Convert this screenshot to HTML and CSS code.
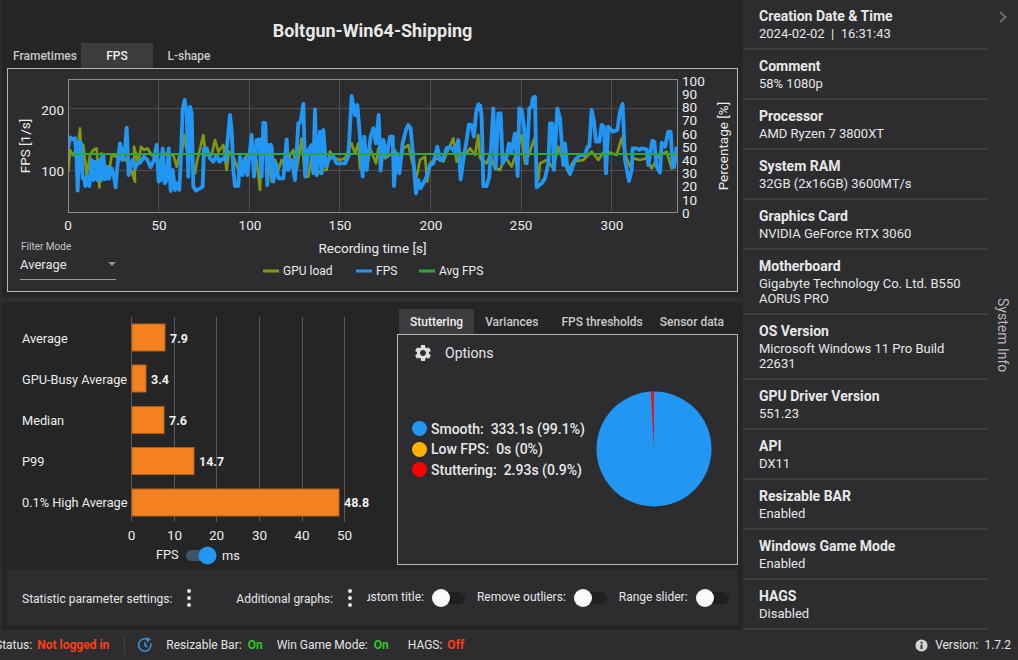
FILE: index.html
```html
<!DOCTYPE html>
<html lang="en">
<head>
<meta charset="utf-8">
<title>Boltgun-Win64-Shipping</title>
<link rel="stylesheet" href="styles.css">
</head>
<body>
<div class="app">
  <div class="upper">
    <main class="main">
      <section class="top">
        <h1 class="title">Boltgun-Win64-Shipping</h1>
        <nav class="tabs">
          <span class="tab tab-a">Frametimes</span>
          <span class="tab tab-a active">FPS</span>
          <span class="tab tab-a">L-shape</span>
        </nav>
        <div class="panel">
          <svg class="chart" viewBox="8 69 729 222" width="729" height="222">
            <defs><clipPath id="plot"><rect x="68" y="79" width="609" height="133"/></clipPath></defs>
            <g class="grid">
              <line x1="158.5" y1="79" x2="158.5" y2="212"/><line x1="249.5" y1="79" x2="249.5" y2="212"/>
              <line x1="339.5" y1="79" x2="339.5" y2="212"/><line x1="430.5" y1="79" x2="430.5" y2="212"/>
              <line x1="521.5" y1="79" x2="521.5" y2="212"/><line x1="611.5" y1="79" x2="611.5" y2="212"/>
              <line x1="68" y1="108.5" x2="677" y2="108.5"/><line x1="68" y1="170.5" x2="677" y2="170.5"/>
            </g>
            <g clip-path="url(#plot)">
              <g class="olive">
                <polyline transform="translate(60 80) scale(.3333)" points="25,275 30,210 38,225 45,215 50,240 60,145 65,250 70,195 80,285 90,225 100,210 110,205 118,322 125,220 135,290 150,260 155,225 165,230 175,225 180,190 195,240 205,245 225,305 222,200 235,250 243,200 252,210 262,205 275,225 285,230 295,260 310,215 320,225 340,225 350,260 358,225 365,225 372,165 380,210 390,215 405,280 412,240 430,165 437,225 445,225 455,225 465,180 475,215 490,195 500,270 507,215 520,230 535,270 550,270 560,225 580,215 590,240 600,330 605,210 620,215 630,225"/>
                <polyline transform="translate(270 80) scale(.3333)" points="0,225 5,305 15,240 25,270 35,240 50,270 60,225 70,210 80,270 95,175 105,290 115,290 125,230 140,285 155,270 170,270 180,215 195,235 210,240 225,235 245,190 255,220 265,190 270,265 290,265 300,205 318,250 325,205 345,235 360,225 375,210 385,270 400,205 415,195 425,240 440,290 450,240 465,230 472,305 480,250 500,235 520,245 530,220 550,175 560,245 575,220 590,220 600,205 615,225 625,165 630,235"/>
                <polyline transform="translate(480 80) scale(.3333)" points="0,235 20,250 30,225 45,265 60,270 75,230 95,260 105,230 125,165 135,250 150,215 163,175 175,300 180,250 200,240 220,265 235,200 250,245 265,270 280,245 310,240 335,215 355,240 375,210 395,220 410,225 425,175 440,235 450,260 460,235 480,240 500,235 515,265 535,230 560,215 575,265 590,240"/>
              </g>
              <g class="blue">
                <polyline transform="translate(60 80) scale(.3333)" points="25,205 30,172 38,178 45,175 50,240 53,332 58,185 63,190 68,295 72,290 76,318 82,290 88,318 95,240 100,300 105,245 112,300 118,240 125,300 130,225 136,298 142,260 147,296 155,265 162,290 167,322 172,260 180,190 186,240 194,215 200,143 206,285 212,255 218,240 225,265 232,250 240,248 252,230 262,240 272,262 282,240 290,195 296,305 302,300 308,205 314,310 320,300 326,205 332,333 338,270 345,330 352,310 358,330 362,250 368,90 374,60 380,100 385,290 390,80 395,100 400,320 408,332 420,325 428,320 432,205 440,205 450,235 460,245 470,225 478,245 490,235 497,240 503,180 510,105 515,150 520,270 525,318 535,318 540,230 548,285 555,235 562,285 570,210 575,165 582,290 590,180 598,178 605,290 610,128 616,130 622,315 630,190"/>
                <polyline transform="translate(270 80) scale(.3333)" points="0,190 5,200 10,305 18,250 25,295 40,295 50,178 55,270 65,240 75,300 85,130 92,125 100,72 106,290 115,210 125,195 130,280 135,88 140,285 150,155 155,280 160,150 168,260 178,235 190,230 200,250 215,250 225,250 235,230 245,48 255,105 262,75 270,170 278,290 283,170 290,270 302,170 310,145 318,190 326,105 332,272 340,180 350,230 360,170 368,170 372,318 380,220 388,280 398,190 408,150 415,135 422,145 430,235 438,340 445,300 452,325 460,310 470,290 480,255 490,250 502,200 510,240 518,240 530,205 540,200 555,215 565,180 572,298 580,240 590,180 597,133 605,135 612,170 618,100 625,73 630,72"/>
                <polyline transform="translate(480 80) scale(.3333)" points="0,72 5,110 10,318 20,318 28,290 40,85 47,265 55,100 62,100 68,250 80,230 87,190 93,220 105,160 113,288 118,85 125,90 132,140 140,250 148,85 155,80 158,55 165,50 170,322 185,310 195,295 205,250 210,130 217,130 222,270 232,85 240,115 250,255 255,190 262,265 270,282 285,240 300,225 315,225 323,200 328,200 335,90 342,125 348,185 358,185 365,135 372,140 378,280 385,140 398,155 412,150 420,95 428,72 435,240 447,303 455,270 458,205 470,205 478,210 485,205 500,208 505,255 517,182 523,185 530,260 540,278 545,188 555,200 565,155 572,155 578,260 582,262 590,200"/>
              </g>
              <line class="avg" x1="68" y1="154" x2="677" y2="154"/>
            </g>
            <rect class="frame" x="68.5" y="79.5" width="609" height="133"/>
            <g class="tick">
              <text x="64" y="115" text-anchor="end">200</text><text x="64" y="176" text-anchor="end">100</text>
              <g text-anchor="middle">
                <text x="68" y="230">0</text><text x="159" y="230">50</text><text x="250" y="230">100</text>
                <text x="340" y="230">150</text><text x="431" y="230">200</text><text x="521" y="230">250</text><text x="612" y="230">300</text>
              </g>
              <text x="682" y="86">100</text><text x="682" y="99">90</text><text x="682" y="112">80</text><text x="682" y="125">70</text>
              <text x="682" y="139">60</text><text x="682" y="152">50</text><text x="682" y="165">40</text><text x="682" y="178">30</text>
              <text x="682" y="191">20</text><text x="682" y="205">10</text><text x="682" y="218">0</text>
              <text transform="rotate(-90 30 146)" x="30" y="146" text-anchor="middle">FPS [1/s]</text>
              <text transform="rotate(-90 728 146)" x="728" y="146" text-anchor="middle">Percentage [%]</text>
              <text x="372.5" y="253" text-anchor="middle">Recording time [s]</text>
            </g>
            <g class="legend">
              <line class="key-olive" x1="263" y1="271" x2="279" y2="271"/><text x="283" y="275">GPU load</text>
              <line class="key-blue" x1="356" y1="271" x2="372" y2="271"/><text x="376" y="275">FPS</text>
              <line class="key-green" x1="419" y1="271" x2="435" y2="271"/><text x="439" y="275">Avg FPS</text>
            </g>
          </svg>
          <div class="filter">
            <span class="filter-label">Filter Mode</span>
            <span class="filter-select"><span>Average</span><i class="caret"></i></span>
          </div>
        </div>
      </section>

      <section class="lower">
        <svg class="bars" viewBox="2 302 395 268" width="395" height="268">
          <g class="bar-grid">
            <line x1="131.5" y1="317" x2="131.5" y2="522"/><line x1="174.5" y1="317" x2="174.5" y2="522"/>
            <line x1="216.5" y1="317" x2="216.5" y2="522"/><line x1="259.5" y1="317" x2="259.5" y2="522"/>
            <line x1="302.5" y1="317" x2="302.5" y2="522"/><line x1="344.5" y1="317" x2="344.5" y2="522"/>
          </g>
          <g class="bar">
            <rect x="132" y="324" width="33" height="27"/><rect x="132" y="365" width="14" height="27"/>
            <rect x="132" y="406.500" width="32" height="27"/><rect x="132" y="447.500" width="62" height="27"/>
            <rect x="132" y="489" width="207" height="27"/>
          </g>
          <g class="bar-label">
            <text x="22" y="343">Average</text><text x="22" y="384">GPU-Busy Average</text><text x="22" y="425">Median</text>
            <text x="22" y="466">P99</text><text x="22" y="507">0.1% High Average</text>
          </g>
          <g class="bar-value">
            <text x="170" y="343">7.9</text><text x="151" y="384">3.4</text><text x="169" y="425">7.6</text>
            <text x="199" y="466">14.7</text><text x="344" y="507">48.8</text>
          </g>
          <g class="bar-tick" text-anchor="middle">
            <text x="131.500" y="540">0</text><text x="174.500" y="540">10</text><text x="216.500" y="540">20</text>
            <text x="259.500" y="540">30</text><text x="302" y="540">40</text><text x="344.500" y="540">50</text>
          </g>
          <text class="bar-label" x="156" y="559">FPS</text>
          <rect class="unit-track" x="186" y="550" width="26" height="11" rx="5.500"/>
          <circle class="unit-knob" cx="207.500" cy="555.500" r="9"/>
          <text class="bar-label" x="222" y="560">ms</text>
        </svg>
        <div class="side">
          <nav class="tabs tabs-b">
            <span class="tab tab-b active">Stuttering</span>
            <span class="tab tab-b">Variances</span>
            <span class="tab tab-b">FPS thresholds</span>
            <span class="tab tab-b tab-last">Sensor data</span>
          </nav>
          <div class="box">
            <div class="options">
              <svg class="gear" viewBox="0 0 24 24" width="20" height="20"><path d="M19.14 12.94c.04-.3.06-.61.06-.94 0-.32-.02-.64-.07-.94l2.03-1.58c.18-.14.23-.41.12-.61l-1.92-3.32c-.12-.22-.37-.29-.59-.22l-2.39.96c-.5-.38-1.03-.7-1.62-.94l-.36-2.54c-.04-.24-.24-.41-.48-.41h-3.84c-.24 0-.43.17-.47.41l-.36 2.54c-.59.24-1.13.57-1.62.94l-2.39-.96c-.22-.08-.47 0-.59.22L2.74 8.87c-.12.21-.08.47.12.61l2.03 1.58c-.05.3-.09.63-.09.94s.02.64.07.94l-2.03 1.58c-.18.14-.23.41-.12.61l1.92 3.32c.12.22.37.29.59.22l2.39-.96c.5.38 1.03.7 1.62.94l.36 2.54c.05.24.24.41.48.41h3.84c.24 0 .44-.17.47-.41l.36-2.54c.59-.24 1.13-.56 1.62-.94l2.39.96c.22.08.47 0 .59-.22l1.92-3.32c.12-.22.07-.47-.12-.61l-2.01-1.58zM12 15.6c-1.98 0-3.6-1.62-3.6-3.6s1.62-3.6 3.6-3.6 3.6 1.62 3.6 3.6-1.62 3.6-3.6 3.6z"/></svg>
              <span>Options</span>
            </div>
            <div class="pie-row">
              <ul class="pie-legend">
                <li><i class="dot dot-blue"></i>Smooth:&nbsp; 333.1s (99.1%)</li>
                <li><i class="dot dot-amber"></i>Low FPS:&nbsp; 0s (0%)</li>
                <li><i class="dot dot-red"></i>Stuttering:&nbsp; 2.93s (0.9%)</li>
              </ul>
              <svg class="pie" viewBox="0 0 116 116" width="116" height="116">
                <circle class="pie-main" cx="58" cy="58" r="57.500"/>
                <path class="pie-slice" d="M58 58L54.800 .6A57.500 57.500 0 0 1 58 .5Z"/>
              </svg>
            </div>
          </div>
        </div>
      </section>

      <section class="toolbar">
        <span class="t-label t-stat">Statistic parameter settings:</span>
        <span class="kebab"><i></i><i></i><i></i></span>
        <span class="t-label t-add">Additional graphs:</span>
        <span class="kebab"><i></i><i></i><i></i></span>
        <span class="t-clip"><span>Custom title:</span></span>
        <span class="switch"></span>
        <span class="t-label t-out">Remove outliers:</span>
        <span class="switch"></span>
        <span class="t-label t-range">Range slider:</span>
        <span class="switch"></span>
      </section>
    </main>

    <aside class="sidebar">
      <div class="info">
        <dl class="item"><dt>Creation Date &amp; Time</dt><dd>2024-02-02 &nbsp;|&nbsp; 16:31:43</dd></dl>
        <dl class="item"><dt>Comment</dt><dd>58% 1080p</dd></dl>
        <dl class="item"><dt>Processor</dt><dd>AMD Ryzen 7 3800XT</dd></dl>
        <dl class="item"><dt>System RAM</dt><dd>32GB (2x16GB) 3600MT/s</dd></dl>
        <dl class="item"><dt>Graphics Card</dt><dd>NVIDIA GeForce RTX 3060</dd></dl>
        <dl class="item"><dt>Motherboard</dt><dd>Gigabyte Technology Co. Ltd. B550 AORUS PRO</dd></dl>
        <dl class="item"><dt>OS Version</dt><dd>Microsoft Windows 11 Pro Build 22631</dd></dl>
        <dl class="item"><dt>GPU Driver Version</dt><dd>551.23</dd></dl>
        <dl class="item"><dt>API</dt><dd>DX11</dd></dl>
        <dl class="item"><dt>Resizable BAR</dt><dd>Enabled</dd></dl>
        <dl class="item"><dt>Windows Game Mode</dt><dd>Enabled</dd></dl>
        <dl class="item"><dt>HAGS</dt><dd>Disabled</dd></dl>
      </div>
      <div class="strip">
        <svg class="chevron" viewBox="0 0 10 14" width="10" height="14"><path d="M2 2l5.500 5L2 12"/></svg>
        <span class="strip-label">System Info</span>
      </div>
    </aside>
  </div>

  <footer class="status">
    <span class="s-first">Status:</span><b class="bad">Not logged in</b>
    <i class="sep"></i>
    <svg class="refresh" viewBox="0 0 16 16" width="16" height="16"><path d="M13.800 6.500A6.200 6.200 0 1 1 10 2.200"/><path d="M8 5v3.500l2.500 1.500"/><path class="refresh-head" d="M9 .2l5 1.800-3.800 3.600z"/></svg>
    <span class="s-bar">Resizable Bar:</span><b class="good">On</b>
    <span class="s-mode">Win Game Mode:</span><b class="good">On</b>
    <span class="s-hags">HAGS:</span><b class="bad">Off</b>
    <span class="version">
      <svg class="info-icon" viewBox="0 0 14 14" width="13" height="13"><circle cx="7" cy="7" r="6.500"/><rect class="info-i" x="6" y="6" width="2" height="5"/><rect class="info-i" x="6" y="3" width="2" height="2"/></svg>
      <span class="v-label">Version:</span><span>1.7.2</span>
    </span>
  </footer>
</div>
</body>
</html>
```

FILE: styles.css
```css
* { box-sizing: border-box; }
html, body { margin: 0; height: 100%; }
body {
  background: #2d2d30;
  color: #e6e6e6;
  font-family: Roboto, "Liberation Sans", sans-serif;
  font-size: 13px;
  overflow: hidden;
}
.app { width: 1018px; height: 660px; display: flex; flex-direction: column; overflow: hidden; }
.upper { display: flex; height: 630px; padding-left: 2px; }

/* main column */
.main { width: 741px; background: #252526; display: flex; flex-direction: column; }
.top { height: 297px; padding: 0 5px; }
.title { margin: 0; height: 43px; padding-top: 18px; display: flex; align-items: center; justify-content: center; font-size: 18px; font-weight: 700; color: #e8e8e8; }
.tabs { display: flex; height: 25px; }
.tab { display: flex; align-items: center; justify-content: center; font-weight: 500; color: #c8c8c8; font-size: 12px; white-space: nowrap; }
.tab.active { background: #3c3c3e; color: #f0f0f0; }
.tab-a { width: 72px; }
.tab-a:first-child { width: 74px; padding-left: 2px; }

.panel { position: relative; height: 224px; border: 1px solid #b4b4b4; background: #2d2d30; }
.chart { display: block; }
.grid line { stroke: #4f4f51; stroke-width: 1; }
.frame { fill: none; stroke: #8a8a8a; stroke-width: 1; }
.olive polyline { fill: none; stroke: #7f9a0e; stroke-width: 8; stroke-linejoin: round; }
.blue polyline { fill: none; stroke: #2196f3; stroke-width: 11.500; stroke-linejoin: round; }
.avg { stroke: #2fa83a; stroke-width: 2; }
.tick text { fill: #ececec; font-size: 13.500px; }
.legend text { fill: #ececec; font-size: 12px; }
.legend line { stroke-width: 3; }
.key-olive { stroke: #7f9a0e; }
.key-blue { stroke: #2196f3; }
.key-green { stroke: #2fa83a; }

.filter { position: absolute; left: 12px; top: 172px; width: 96px; display: flex; flex-direction: column; }
.filter-label { font-size: 10px; line-height: 12px; color: #c4c4c4; padding-left: 1px; }
.filter-select { display: flex; align-items: center; justify-content: space-between; height: 27px; padding-bottom: 4px; border-bottom: 1px solid #9a9a9a; font-size: 13px; color: #e6e6e6; }
.caret { width: 0; height: 0; border-left: 4px solid transparent; border-right: 4px solid transparent; border-top: 4px solid #8e8e8e; }

/* lower */
.lower { display: flex; height: 273px; border-top: 5px solid #2d2d30; }
.bars { display: block; flex: none; }
.bar-grid line { stroke: #59595b; stroke-width: 1; }
.bar rect { fill: #f48120; stroke: #b5601a; stroke-width: 1; }
.bar-tick text { fill: #ececec; font-size: 13.500px; }
.bar-label, .bar-label text { fill: #ececec; font-size: 12.750px; }
.bar-value text { fill: #f0f0f0; font-size: 12.500px; font-weight: 700; }
.unit-track { fill: #3d5468; }
.unit-knob { fill: #2196f3; }

.side { flex: none; width: 346px; padding-top: 7px; }
.tabs-b { padding-left: 2px; }
.tab-b { padding: 0 11px; }
.tab-b:nth-child(3) { padding: 0 12px; }
.tab-b.tab-last { padding: 0 0 0 5px; }
.box { width: 341px; height: 231px; border: 1px solid #b4b4b4; background: #2d2d30; }
.options { display: flex; align-items: center; height: 36px; padding-left: 15px; gap: 12px; font-size: 14px; color: #e6e6e6; }
.gear { fill: #dcdcdc; }
.pie-row { display: flex; align-items: center; padding: 20px 0 0 14px; }
.pie-legend { list-style: none; margin: 0; padding: 0; width: 181px; font-size: 14px; font-weight: 500; color: #e8e8e8; }
.pie-legend li { display: flex; align-items: center; height: 20.500px; white-space: pre; }
.dot { width: 15px; height: 15px; border-radius: 50%; margin-right: 4px; flex: none; }
.dot-blue { background: #2196f3; }
.dot-amber { background: #ffb300; }
.dot-red { background: #ff0000; }
.pie { flex: none; margin-left: 3px; }
.pie-main { fill: #2196f3; }
.pie-slice { fill: #e8101a; }

/* toolbar */
.toolbar { height: 55px; margin: 0 5px; background: #2d2d30; display: flex; align-items: center; font-size: 12px; white-space: nowrap; }
.t-label { color: #e6e6e6; flex: none; }
.t-stat { margin: 0 0 0 15px; padding-top: 3px; }
.t-add { margin-left: 45px; padding-top: 3px; }
.t-out { margin-left: 12px; padding-bottom: 2px; }
.t-range { margin-left: 12px; padding-bottom: 2px; }
.kebab { display: flex; flex: none; flex-direction: column; gap: 3px; margin-left: 15px; }
.kebab i { width: 4px; height: 4px; border-radius: 50%; background: #e6e6e6; }
.t-clip { flex: none; width: 57px; margin-left: 15px; padding-bottom: 2px; overflow: hidden; display: flex; justify-content: flex-end; color: #e6e6e6; }
.t-clip span { flex: none; }
.switch { position: relative; flex: none; width: 32px; height: 12px; margin-left: 9px; border-radius: 6px; background: #1f1f20; }
.switch::after { content: ""; position: absolute; left: -1px; top: -3px; width: 18px; height: 18px; border-radius: 50%; background: #fafafa; }

/* sidebar */
.sidebar { flex: 1; display: flex; background: #2d2d30; }
.info { width: 244px; }
.item { margin: 0; padding: 8px 16px 7px; border-bottom: 2px solid #3f3f41; }
.item dt { font-size: 14px; font-weight: 700; line-height: 17px; color: #e8e8e8; }
.item dd { margin: 1px 0 0; font-size: 13px; line-height: 15px; color: #e6e6e6; }
.strip { flex: 1; display: flex; flex-direction: column; align-items: center; padding: 10px 0 0; }
.chevron { fill: none; stroke: #6b6b6d; stroke-width: 2; flex: none; }
.strip-label { writing-mode: vertical-rl; margin-top: 274px; font-size: 14px; color: #b8b8b8; }

/* status */
.status { height: 30px; display: flex; align-items: center; padding-right: 7px; color: #e4e4e4; font-size: 12px; }
.status b { font-weight: 700; }
.s-first { margin-left: -5px; margin-right: 5px; }
.bad { color: #ff3d13; }
.good { color: #2ecb22; margin-left: 6px; }
.s-hags + .bad { margin-left: 5px; }
.sep { width: 1px; height: 20px; background: #414143; margin: 0 12px 0 15px; }
.refresh { fill: none; stroke: #3b8fd6; stroke-width: 1.600; flex: none; }
.refresh-head { fill: #3b8fd6; stroke: none; }
.s-bar { margin-left: 13px; }
.s-mode { margin-left: 14px; }
.s-hags { margin-left: 19px; }
.version { margin-left: auto; display: flex; align-items: center; gap: 6px; }
.info-icon { fill: #d4d4d4; margin-right: 1px; }
.info-i { fill: #2d2d30; }
```
